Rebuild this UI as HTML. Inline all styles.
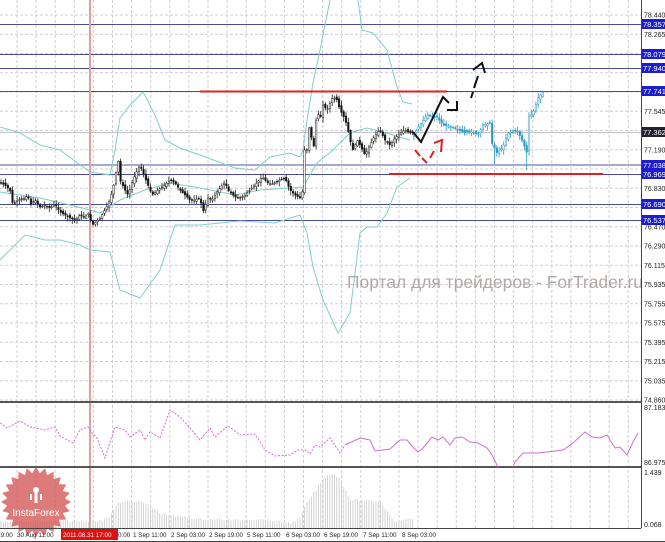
<!DOCTYPE html>
<html><head><meta charset="utf-8"><style>
html,body{margin:0;padding:0;background:#fff;width:665px;height:542px;overflow:hidden}
svg{display:block}
text{font-family:"Liberation Sans",sans-serif}
</style></head><body>
<svg id="s" width="665" height="542" viewBox="0 0 665 542" xmlns="http://www.w3.org/2000/svg">
<rect width="665" height="542" fill="#fff"/>
<g id="grid" stroke="#cfcfcf" stroke-width="1" stroke-dasharray="3,2"></g>
<g stroke-width="1">
<line x1="0" y1="24.5" x2="641" y2="24.5" stroke="#4a4aa0"/>
<line x1="0" y1="54.5" x2="641" y2="54.5" stroke="#4a4aa0"/>
<line x1="0" y1="68.5" x2="641" y2="68.5" stroke="#4a4aa0"/>
<line x1="0" y1="91.5" x2="641" y2="91.5" stroke="#4a4aa0"/>
<line x1="0" y1="132.5" x2="641" y2="132.5" stroke="#c4c4c4"/>
<line x1="0" y1="165" x2="641" y2="165" stroke="#a8a8d8" stroke-width="2"/>
<line x1="0" y1="174.5" x2="641" y2="174.5" stroke="#4a4aa0"/>
<line x1="0" y1="204.5" x2="641" y2="204.5" stroke="#4a4aa0"/>
<line x1="0" y1="220.5" x2="641" y2="220.5" stroke="#4a4aa0"/>
</g>
<line x1="90" y1="0" x2="90" y2="528" stroke="#e0a0a0" stroke-width="2"/>
<g fill="none" stroke="#7fd0c8" stroke-width="1">
<polyline points="0,127 20,133 40,145 60,150 90,172 110,175 115,150 120,118 130,105 143,92 155,115 165,140 180,148 200,155 235,168 255,170 270,157 290,153 300,157 303,150 307,120 313,83 320,50 330,0"/>
<polyline points="358,0 362,30 373,33 387,50 397,87 403,102 412,104"/>
<polyline points="0,192 40,198 70,205 90,210 100,213 120,200 145,190 170,183 200,188 235,195 260,190 290,188 303,187 317,163 333,150 350,133 367,128 383,132 400,137 410,140"/>
<polyline points="0,260 25,235 45,240 60,240 80,245 90,250 110,252 120,290 140,298 160,270 175,225 200,225 240,221 275,223 300,215 307,233 313,267 323,300 338,333 350,313 360,233 367,227 377,227 387,213 397,187 410,178"/>
</g>
<g id="candles"></g>
<g id="cyan"></g>
<line x1="200" y1="91.5" x2="447" y2="91.5" stroke="#e02020" stroke-width="2"/>
<line x1="389" y1="174" x2="603" y2="174" stroke="#e02020" stroke-width="2"/>
<g fill="none" stroke="#111" stroke-width="2">
<polyline points="413,132 421,142 443,97 449,103"/>
<polyline points="447,110 457,110 457,101"/>
<line x1="471" y1="98" x2="473" y2="92"/>
<line x1="474" y1="88" x2="478" y2="76"/>
<polyline points="473,70 482,63 485,73"/>
</g>
<g fill="none" stroke="#e02020" stroke-width="2">
<line x1="415" y1="150" x2="420" y2="156"/><line x1="422" y1="158" x2="427" y2="163"/>
<line x1="430" y1="158" x2="434" y2="151"/>
<polyline points="434,143 442,140 441,152"/>
</g>
<text x="347" y="288" font-size="17.5" fill="#a89898" fill-opacity="0.85" textLength="296" lengthAdjust="spacingAndGlyphs">Портал для трейдеров - ForTrader.ru</text>
<rect x="0" y="401" width="641" height="2" fill="#555"/>
<rect x="0" y="466" width="641" height="2" fill="#555"/>
<g fill="none" stroke="#d070d0" stroke-width="1">
<polyline stroke-dasharray="2,1.5" points="0,423 7,428 20,421 30,427 45,430 55,427 60,436 73,443 80,430 88,427 92,433 97,438 105,458 115,427 125,430 130,437 140,430 145,440 150,432 160,438 170,410 180,417 190,428 200,440 210,428 215,437 228,426 240,435 255,434 265,450 275,456 290,455 298,450 305,450 310,454 315,445 320,447 330,438 340,453 345,445"/>
<polyline points="345,445 360,438 370,440 375,451 390,449 400,440 407,440 413,447 418,452 423,448 432,437 438,440 443,437 450,445 455,438 462,437 470,442 478,443 487,448 492,455 498,467"/>
<polyline points="513,467 515,462 523,453 530,453 537,453 547,452 563,450 573,443 585,432 592,437 600,438 607,435 615,448 620,447 627,455 633,442 638,433"/>
</g>
<g id="vol" stroke="#c9c9c9" stroke-width="0.8"></g>
<polygon id="star" fill="#d45a5a" fill-opacity="0.8"/>
<g fill="#fff"><circle cx="36" cy="490" r="3"/><rect x="34.5" y="493" width="3" height="10"/><rect x="30" y="494" width="2" height="6"/><rect x="40" y="494" width="2" height="6"/></g>
<text x="36" y="516" font-size="10" fill="#fff" text-anchor="middle">InstaForex</text>
<line x1="641.5" y1="0" x2="641.5" y2="528" stroke="#444"/>
<line x1="0" y1="528.5" x2="641" y2="528.5" stroke="#444"/>
<line x1="0" y1="541.5" x2="665" y2="541.5" stroke="#444"/>
<g id="ylab" font-size="7" fill="#222"></g>
<g font-size="7.5">
<rect x="642" y="19" width="23" height="10" fill="#1c1cd0"/><text x="643" y="27" fill="#fff">78.357</text>
<rect x="642" y="49" width="23" height="10" fill="#1c1cd0"/><text x="643" y="57" fill="#fff">78.079</text>
<rect x="642" y="63" width="23" height="10" fill="#1c1cd0"/><text x="643" y="71" fill="#fff">77.940</text>
<rect x="642" y="86" width="23" height="10" fill="#1c1cd0"/><text x="643" y="94" fill="#fff">77.741</text>
<rect x="642" y="127" width="23" height="10" fill="#223"/><text x="643" y="135" fill="#fff">77.362</text>
<rect x="642" y="160" width="23" height="10" fill="#1c1cd0"/><text x="643" y="168" fill="#fff">77.038</text>
<rect x="642" y="169" width="23" height="10" fill="#1c1cd0"/><text x="643" y="177" fill="#fff">76.969</text>
<rect x="642" y="199" width="23" height="10" fill="#1c1cd0"/><text x="643" y="207" fill="#fff">76.690</text>
<rect x="642" y="215" width="23" height="10" fill="#1c1cd0"/><text x="643" y="223" fill="#fff">76.537</text>
</g>
<g font-size="7" fill="#222">
<text x="644" y="410">87.183</text><text x="644" y="465">86.975</text>
<text x="644" y="475">1.439</text><text x="644" y="527">0.068</text>
</g>
<g font-size="6.3" fill="#222">
<text x="-3" y="537">19:00</text><text x="17" y="537">30 Aug 11:00</text><text x="118" y="537">0:00</text>
<rect x="61" y="529" width="57" height="11" fill="#e01010"/><text x="63" y="537" fill="#fff">2011.08.31 17:00</text>
<text x="133" y="537">1 Sep 11:00</text><text x="171" y="537">2 Sep 03:00</text><text x="209" y="537">2 Sep 19:00</text>
<text x="247" y="537">5 Sep 11:00</text><text x="286" y="537">6 Sep 03:00</text><text x="324" y="537">6 Sep 19:00</text>
<text x="363" y="537">7 Sep 11:00</text><text x="402" y="537">8 Sep 03:00</text>
</g>
</svg>
<script>
var NS="http://www.w3.org/2000/svg";
function el(p,t,a){var e=document.createElementNS(NS,t);for(var k in a)e.setAttribute(k,a[k]);p.appendChild(e);return e;}
var g=document.getElementById('grid');
for(var x=17;x<641;x+=19.1)el(g,'line',{x1:x,y1:0,x2:x,y2:528});
for(var y=15;y<401;y+=19.25)el(g,'line',{x1:0,y1:y,x2:641,y2:y});
var yl=document.getElementById('ylab');
var labs=["78.440","78.265","78.085","77.905","77.725","77.545","77.365","77.190","77.010","76.830","76.650","76.470","76.290","76.115","75.935","75.755","75.575","75.395","75.215","75.035","74.860"];
var skip={2:1,3:1,4:1,6:1,8:1,10:1};
for(var i=0;i<labs.length;i++){if(skip[i])continue;var t=el(yl,'text',{x:644,y:15+i*19.25+2.5});t.textContent=labs[i];}
function interp(p,x){for(var i=1;i<p.length;i++){if(x<=p[i][0]){var a=p[i-1],b=p[i];return a[1]+(b[1]-a[1])*(x-a[0])/(b[0]-a[0]||1);}}return p[p.length-1][1];}
var seed=7;function rnd(){seed=(seed*9301+49297)%233280;return seed/233280;}
var P=[[0,183],[5,185],[10,190],[13,205],[18,200],[25,198],[28,195],[30,205],[35,200],[40,207],[45,205],[50,208],[55,204],[60,212],[65,215],[70,218],[75,220],[80,215],[85,218],[88,212],[92,225],[96,222],[100,218],[105,210],[110,200],[115,180],[118,158],[120,180],[125,190],[128,195],[132,183],[135,175],[140,165],[145,178],[148,185],[152,195],[158,190],[165,185],[170,180],[175,183],[180,190],[185,195],[190,200],[195,200],[200,198],[203,212],[208,198],[212,200],[215,195],[220,188],[225,182],[228,190],[235,197],[240,198],[245,195],[250,190],[255,185],[262,177],[268,183],[272,184],[280,180],[285,178],[290,190],[295,195],[300,198],[303,190],[305,140],[307,150],[310,120],[313,155],[317,110],[320,120],[323,105],[327,110],[333,97],[337,100],[340,110],[343,115],[347,125],[350,140],[353,150],[357,140],[360,145],[365,155],[370,145],[375,135],[380,130],[385,140],[390,145],[395,138],[400,133],[405,130],[410,133],[414,132]];
var cg=document.getElementById('candles');
for(var x=1;x<413;x+=2.3){var c=interp(P,x),o=interp(P,x-2.3)+(rnd()-0.5)*3;var hi=Math.min(c,o)-1-rnd()*4,lo=Math.max(c,o)+1+rnd()*4;
el(cg,'line',{x1:x,y1:hi,x2:x,y2:lo,stroke:'#222','stroke-width':0.8});
var up=c<o;el(cg,'rect',{x:x-0.8,y:Math.min(c,o),width:1.6,height:Math.max(Math.abs(c-o),0.8),fill:up?'#fff':'#111',stroke:'#222','stroke-width':0.5});}
var C=[[413,135],[420,125],[427,115],[437,117],[443,125],[453,127],[463,132],[473,132],[478,135],[483,125],[490,123],[492,143],[497,153],[503,147],[508,133],[517,130],[522,140],[527,153],[528,117],[533,113],[538,98],[543,92]];
var cy=document.getElementById('cyan');
for(var x=414;x<544;x+=2.3){var c=interp(C,x),o=interp(C,x-2.3)+(rnd()-0.5)*3;var hi=Math.min(c,o)-1-rnd()*4,lo=Math.max(c,o)+1+rnd()*4;if(Math.abs(x-494)<1.5)lo=164;if(Math.abs(x-526)<1.5)lo=170;
el(cy,'line',{x1:x,y1:hi,x2:x,y2:lo,stroke:'#2a98c0','stroke-width':0.8});
el(cy,'rect',{x:x-0.8,y:Math.min(c,o),width:1.6,height:Math.max(Math.abs(c-o),0.8),fill:c<o?'#fff':'#2a98c0',stroke:'#2a98c0','stroke-width':0.5});}
var V=[[0,521],[60,520],[100,520],[110,515],[118,502],[130,500],[140,500],[150,505],[160,512],[175,515],[200,518],[240,519],[260,518],[290,522],[300,518],[305,505],[315,490],[325,476],[333,472],[340,478],[350,498],[365,500],[380,500],[387,510],[395,520],[412,518]];
var vg=document.getElementById('vol');
for(var x=1;x<413;x+=2.3){el(vg,'line',{x1:x,y1:interp(V,x)+rnd()*2,x2:x,y2:528});}
var pts=[],n=24;for(var i=0;i<2*n;i++){var r=i%2?29:35,a=Math.PI*i/n;pts.push((36+r*Math.cos(a)).toFixed(1)+','+(502+r*Math.sin(a)).toFixed(1));}
document.getElementById('star').setAttribute('points',pts.join(' '));
</script>
</body></html>
